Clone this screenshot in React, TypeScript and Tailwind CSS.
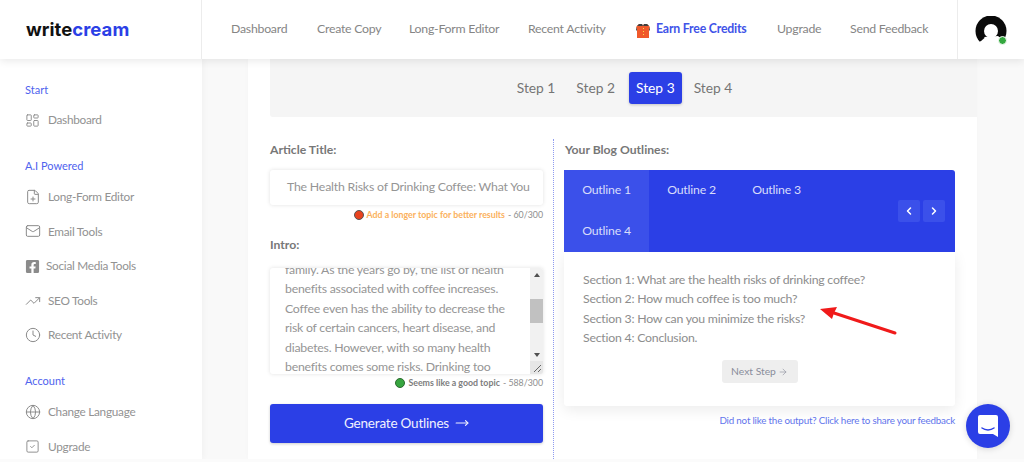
import React from "react";
import { LayoutDashboard, FilePlus, Mail, TrendingUp, Clock, Globe, SquareCheck, ChevronLeft, ChevronRight, ArrowRight, MoveRight } from "lucide-react";
import { FaFacebookSquare } from "react-icons/fa";

const font = { fontFamily: '"Lato","Open Sans",sans-serif' };

function Gift() {
  return (
    <svg width="14" height="16" viewBox="0 0 14 16">
      <path d="M3 2h3l1 2 1-2h3l3 3-1 2v9H1V7L0 5z" fill="#f0592b" />
      <path d="M3 2h3l1 2 1-2h3l2 2H1z" fill="#3f3f3f" />
      <path d="M0 5l1 2v2l-1-1zM14 5l-1 2v2l1-1z" fill="#555" />
      <path d="M7.500 6v1M7.500 9v1M7.500 12v1" stroke="#f9d94b" strokeWidth="1" />
    </svg>
  );
}

function Avatar() {
  return (
    <svg width="32" height="28" viewBox="0 0 32 28">
      <circle cx="16" cy="15" r="15.500" fill="#0a0a0a" />
      <path d="M5 25L9 21L23 20L29 25L29 29L5 29z" fill="#fff" />
      <circle cx="16" cy="15" r="7" fill="#fff" />
      <path d="M1.500 19C2.500 22 4 24 5.500 25.500L9.500 22L8 16z" fill="#0a0a0a" />
    </svg>
  );
}

function NavItem({ icon, label, shift }: { icon: React.ReactNode; label: string; shift?: boolean }) {
  return (
    <div className="flex h-[34.6px] items-center pl-[25px] text-[11.8px] tracking-[-0.28px] text-[#929292]">
      <span className="flex w-[23px] shrink-0 items-center">{icon}</span>
      <span className={shift ? "-ml-[2px]" : ""}>{label}</span>
    </div>
  );
}

function SideLabel({ children, className }: { children: React.ReactNode; className: string }) {
  return <div className={`pl-[25px] text-[11px] leading-[14px] text-[#4f63ee] ${className}`}>{children}</div>;
}

function Label({ children, className = "" }: { children: React.ReactNode; className?: string }) {
  return <div className={`text-[12.2px] font-bold leading-[16px] text-[#777777] ${className}`}>{children}</div>;
}

function Tab({ label, active }: { label: string; active?: boolean }) {
  return (
    <div className={`flex h-[41px] w-[85px] items-center justify-center text-[12.3px] tracking-[-0.2px] text-[#d8dcfb] ${active ? "bg-[#3b50ea]" : ""}`}>{label}</div>
  );
}

export default function App() {
  const ic = { size: 16, strokeWidth: 1.5, className: "text-[#8b8b8b]" };
  return (
    <div style={font} className="relative h-[462px] w-[1024px] overflow-hidden bg-[#fbfbfb]">
      <div className="flex h-[459px] flex-col overflow-hidden">
        {/* header */}
        <header className="relative z-20 flex h-[59px] shrink-0 items-center bg-white shadow-[0_2px_8px_rgba(0,0,0,0.09)]">
          <div className="flex h-full w-[202px] shrink-0 items-center border-r border-[#ececec] pl-[26px]">
            <span className="text-[18.5px] font-bold leading-none tracking-[0.05px]" style={{ fontFamily: '"Inter",sans-serif' }}>
              <span className="text-[#111]">write</span>
              <span className="text-[#2b3fe6]">cream</span>
            </span>
          </div>
          <nav className="flex h-full flex-1 items-center pl-[29px] text-[12.3px] tracking-[-0.25px] text-[#858585]">
            <span className="w-[86px]">Dashboard</span>
            <span className="w-[92px]">Create Copy</span>
            <span className="w-[119px] whitespace-nowrap">Long-Form Editor</span>
            <span className="w-[108px] whitespace-nowrap">Recent Activity</span>
            <span className="mr-[6px]"><Gift /></span>
            <span className="w-[121px] whitespace-nowrap font-bold tracking-[-0.2px] text-[#4153e8]">Earn Free Credits</span>
            <span className="w-[73px]">Upgrade</span>
            <span className="whitespace-nowrap">Send Feedback</span>
          </nav>
          <div className="relative flex h-full w-[67px] shrink-0 items-center justify-center border-l border-[#ececec]">
            <span className="relative flex"><Avatar />
              <span className="absolute -bottom-[1px] right-[0px] h-[9px] w-[9px] rounded-full border border-white bg-[#34a83f]" />
            </span>
          </div>
        </header>

        <div className="flex min-h-0 flex-1">
          {/* sidebar */}
          <aside className="z-10 w-[202px] shrink-0 overflow-hidden bg-white pt-[24px] shadow-[2px_0_6px_rgba(0,0,0,0.03)]">
            <SideLabel className="">Start</SideLabel>
            <div className="mt-[6px]"><NavItem icon={<LayoutDashboard {...ic} size={15} />} label="Dashboard" /></div>
            <SideLabel className="mt-[21px]">A.I Powered</SideLabel>
            <div className="mt-[7px]">
              <NavItem icon={<FilePlus {...ic} />} label="Long-Form Editor" />
              <NavItem icon={<Mail {...ic} />} label="Email Tools" />
              <NavItem icon={<FaFacebookSquare size={15} className="text-[#8b8b8b]" />} label="Social Media Tools" shift />
              <NavItem icon={<TrendingUp {...ic} />} label="SEO Tools" />
              <NavItem icon={<Clock {...ic} />} label="Recent Activity" />
            </div>
            <SideLabel className="mt-[21px]">Account</SideLabel>
            <div className="mt-[7px]">
              <NavItem icon={<Globe {...ic} />} label="Change Language" />
              <NavItem icon={<SquareCheck {...ic} size={15} />} label="Upgrade" />
            </div>
          </aside>

          {/* main */}
          <main className="flex min-w-0 flex-1 bg-[#f9f9f9] pl-[46px] pr-[47px]">
            <div className="flex w-[729px] flex-col bg-white pl-[22px] shadow-[0_0_6px_rgba(0,0,0,0.02)]">
              <div className="flex h-[58px] shrink-0 items-center justify-center gap-[7px] rounded-bl-[3px] bg-[#f5f5f5] pl-[2px] text-[13.800px] text-[#757575]">
                <span className="px-[7px]">Step 1</span>
                <span className="px-[7px]">Step 2</span>
                <span className="rounded-[3px] bg-[#2b3fe6] px-[7px] py-[7px] leading-[18px] text-white shadow-[0_1px_3px_rgba(0,0,0,0.2)]">Step 3</span>
                <span className="-ml-[2px] px-[7px]">Step 4</span>
              </div>

              <div className="flex min-h-0 flex-1 pt-[22px]">
                {/* left */}
                <div className="w-[273px] shrink-0">
                  <Label className="mt-[3px]">Article Title:</Label>
                  <div className="mt-[12px] flex h-[35px] items-center overflow-hidden rounded-[3px] bg-white pl-[17px] text-[12.3px] tracking-[-0.2px] whitespace-nowrap text-[#959595] shadow-[0_0_4px_rgba(0,0,0,0.12)]">
                    The Health Risks of Drinking Coffee: What You
                  </div>
                  <div className="mt-[3px] flex h-[13px] items-center justify-end gap-[3px] text-[8.800px] text-[#8e8e8e]">
                    <span className="h-[10px] w-[10px] rounded-full border border-[#555] bg-[#e8431f]" />
                    <span className="font-bold text-[#fbb15c]">Add a longer topic for better results</span>
                    <span>- 60/300</span>
                  </div>
                  <Label className="mt-[16px]">Intro:</Label>
                  <div className="mt-[15px] flex h-[106px] overflow-hidden rounded-[3px] bg-white shadow-[0_0_4px_rgba(0,0,0,0.12)]">
                    <div className="min-w-0 flex-1 overflow-hidden pl-[15px] pr-[6px] text-[12.3px] leading-[19.4px] tracking-[-0.23px] text-[#959595]">
                      <div className="-mt-[8px]">
                        family. As the years go by, the list of health benefits associated with coffee increases. Coffee even has the ability to decrease the risk of certain cancers, heart disease, and diabetes. However, with so many health benefits comes some risks. Drinking too
                      </div>
                    </div>
                    <div className="flex w-[13px] shrink-0 flex-col items-center bg-[#f1f1f1]">
                      <div className="flex h-[13px] items-center justify-center"><span className="h-0 w-0 border-x-[3.5px] border-b-[4px] border-x-transparent border-b-[#505050]" /></div>
                      <div className="mt-[18px] h-[24px] w-full bg-[#c1c1c1]" />
                      <div className="mt-[25px] flex h-[13px] items-center justify-center"><span className="h-0 w-0 border-x-[3.5px] border-t-[4px] border-x-transparent border-t-[#505050]" /></div>
                      <div className="flex h-[13px] w-full items-end justify-end bg-[#e6e6e6] p-[2px]">
                        <svg width="7" height="7" viewBox="0 0 7 7"><path d="M0 7L7 0M4 7L7 4" stroke="#666" strokeWidth="1" /></svg>
                      </div>
                    </div>
                  </div>
                  <div className="mt-[2px] flex h-[13px] items-center justify-end gap-[3px] text-[8.800px] text-[#8e8e8e]">
                    <span className="h-[10px] w-[10px] rounded-full border border-[#2c6b30] bg-[#37a53f]" />
                    <span className="font-bold text-[#7d7d7d]">Seems like a good topic</span>
                    <span>- 588/300</span>
                  </div>
                  <div className="mt-[15px] flex h-[39px] items-center justify-center gap-[6px] rounded-[3px] bg-[#2b3fe6] text-[13.5px] tracking-[-0.2px] text-[#f0f1fe] shadow-[0_1px_3px_rgba(0,0,0,0.2)]">
                    <span className="-mt-[1px]">Generate Outlines</span> <MoveRight size={14} strokeWidth={2} className="-mt-[1px]" />
                  </div>
                </div>

                {/* divider */}
                <div className="ml-[10px] mr-[10px] w-0 border-l border-dotted border-[#8e9bf0]" />

                {/* right */}
                <div className="w-[391px] shrink-0">
                  <Label className="mt-[3px] pl-[1px]">Your Blog Outlines:</Label>
                  <div className="relative mt-[12px] flex h-[82px] flex-wrap content-start rounded-t-[3px] bg-[#2b3fe6]">
                    <Tab label="Outline 1" active />
                    <Tab label="Outline 2" />
                    <Tab label="Outline 3" />
                    <div className="w-[100px]" />
                    <Tab label="Outline 4" active />
                    <div className="absolute right-[10px] top-[30px] flex gap-[3px]">
                      <span className="flex h-[22px] w-[22px] items-center justify-center rounded-[2px] bg-[#3b50ea] text-white"><ChevronLeft size={12} strokeWidth={3} /></span>
                      <span className="flex h-[22px] w-[22px] items-center justify-center rounded-[2px] bg-[#3b50ea] text-white"><ChevronRight size={12} strokeWidth={3} /></span>
                    </div>
                  </div>
                  <div className="rounded-b-[3px] bg-white px-[19px] pb-[23px] pt-[18px] shadow-[0_4px_14px_rgba(0,0,0,0.08)]">
                    <div className="text-[12.3px] leading-[19.3px] tracking-[-0.23px] text-[#8d8d8d]">
                      <div>Section 1: What are the health risks of drinking coffee?</div>
                      <div>Section 2: How much coffee is too much?</div>
                      <div>Section 3: How can you minimize the risks?</div>
                      <div>Section 4: Conclusion.</div>
                    </div>
                    <div className="mt-[13px] flex justify-center">
                      <span className="flex h-[23px] w-[76px] items-center justify-center gap-[2px] rounded-[3px] bg-[#eeeeee] text-[10.3px] text-[#8a8d9b]">
                        Next Step <ArrowRight size={10} strokeWidth={1.5} />
                      </span>
                    </div>
                  </div>
                  <div className="mt-[8px] text-right text-[9.800px] leading-[13px] tracking-[-0.2px] text-[#6275ec]">
                    Did not like the output? Click here to share your feedback
                  </div>
                </div>
              </div>
            </div>
          </main>
        </div>
      </div>

      {/* annotation arrow */}
      <svg className="absolute left-[820px] top-[304px]" width="80" height="34" viewBox="0 0 80 34">
        <path d="M75 29L14 9" stroke="#f01a1a" strokeWidth="3" strokeLinecap="round" />
        <path d="M0 5L17 3L14 9L12 15z" fill="#f01a1a" />
      </svg>

      {/* chat bubble */}
      <div className="absolute left-[966px] top-[404px] flex h-[44px] w-[44px] items-center justify-center rounded-full bg-[#2b3fe6] shadow-[0_1px_6px_rgba(0,0,0,0.15)]">
        <svg width="22" height="24" viewBox="0 0 22 24">
          <path d="M3 1h16a2 2 0 0 1 2 2v20l-5-3H3a2 2 0 0 1-2-2V3a2 2 0 0 1 2-2z" fill="#fff" />
          <path d="M5 14c3.500 2.500 8.500 2.500 12 0" stroke="#2b3fe6" strokeWidth="1.500" fill="none" strokeLinecap="round" />
        </svg>
      </div>
    </div>
  );
}
